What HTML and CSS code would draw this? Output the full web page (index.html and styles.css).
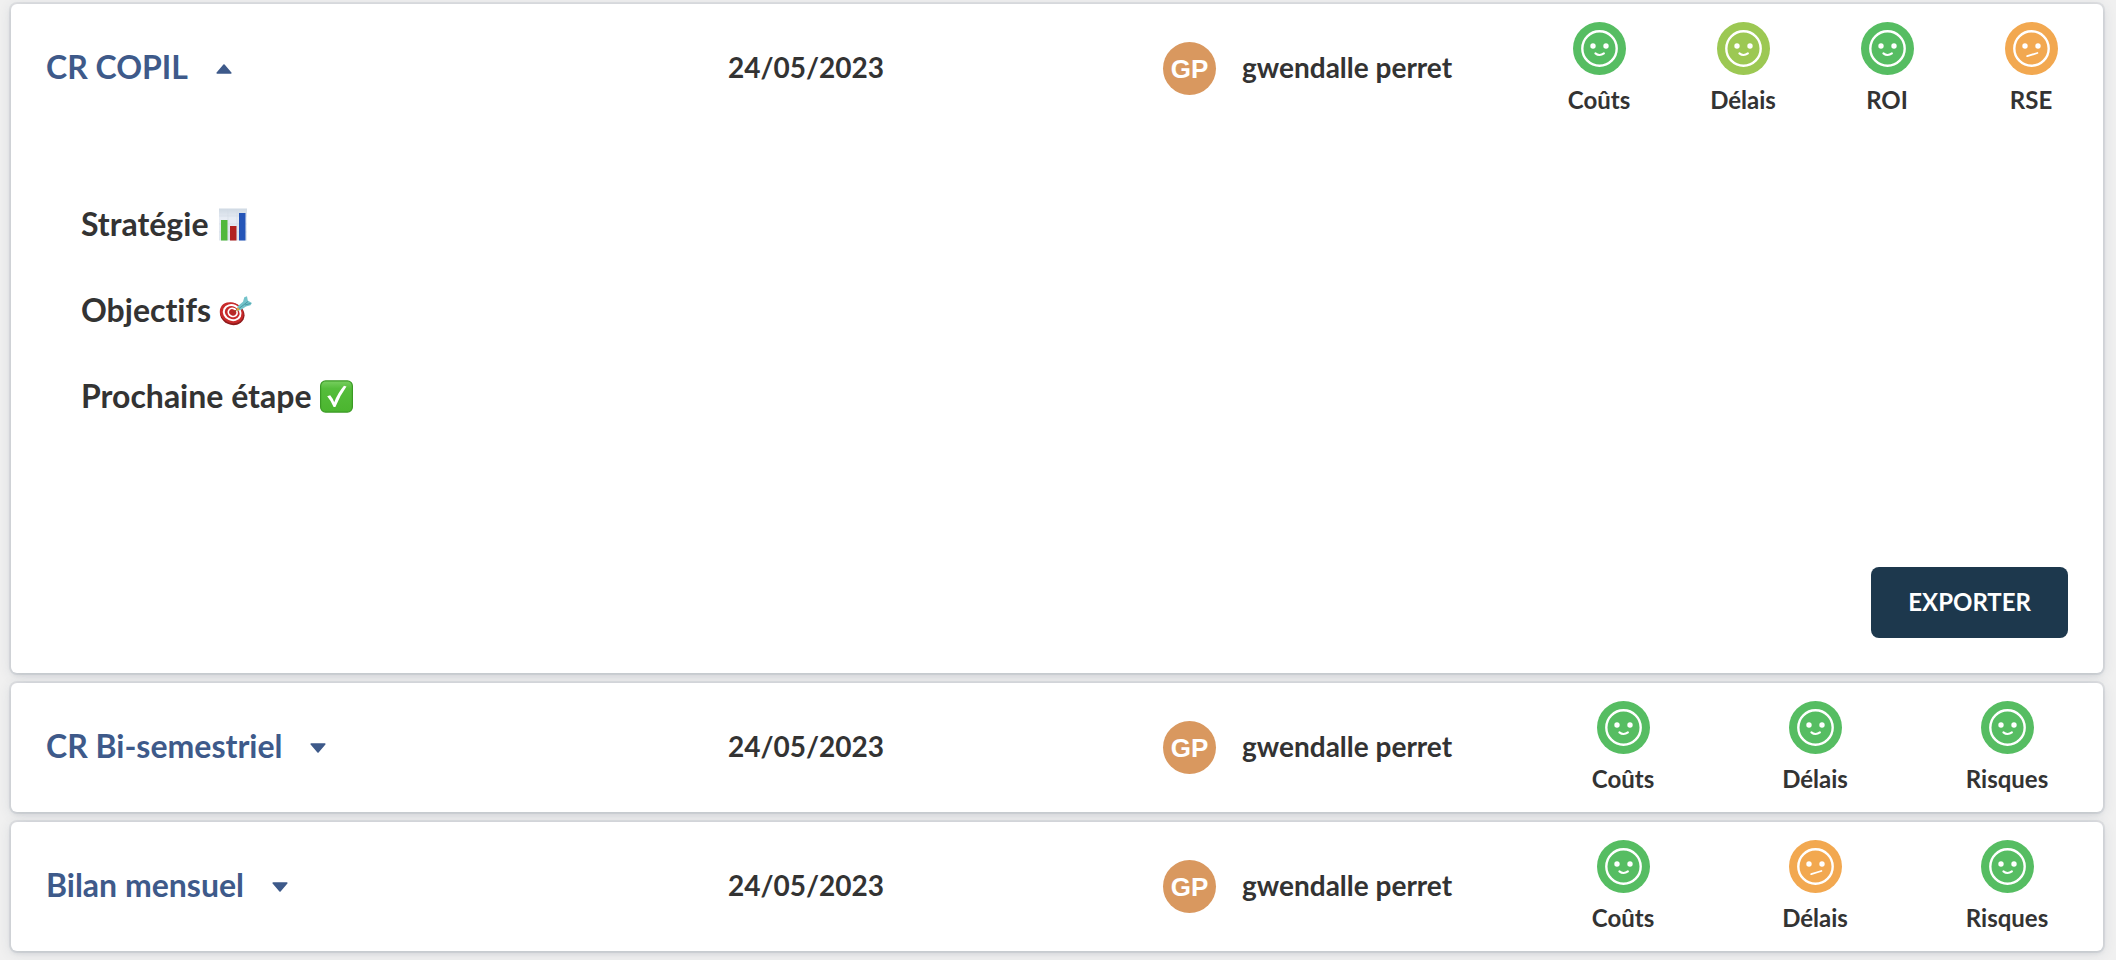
FILE: index.html
```html
<!DOCTYPE html>
<html lang="fr">
<head>
<meta charset="utf-8">
<title>Comptes rendus</title>
<link rel="stylesheet" href="styles.css">
</head>
<body>
<svg class="defs" aria-hidden="true">
  <symbol id="happy" viewBox="0 0 53 53">
    <circle cx="26.5" cy="26.5" r="26.5" fill="currentColor"/>
    <circle cx="26.5" cy="26.5" r="17.2" fill="none" stroke="#fff" stroke-width="2.4"/>
    <circle cx="20" cy="24" r="2.7" fill="#fff"/><circle cx="33" cy="24" r="2.7" fill="#fff"/>
    <path d="M22.4 31.4Q26.5 34.6 30.9 31.4" fill="none" stroke="#fff" stroke-width="2.1" stroke-linecap="round"/>
  </symbol>
  <symbol id="unsure" viewBox="0 0 53 53">
    <circle cx="26.5" cy="26.5" r="26.5" fill="currentColor"/>
    <circle cx="26.5" cy="26.5" r="17.2" fill="none" stroke="#fff" stroke-width="2.4"/>
    <circle cx="20" cy="24" r="2.7" fill="#fff"/><circle cx="33" cy="24" r="2.7" fill="#fff"/>
    <path d="M22.2 34.2L32.4 31" fill="none" stroke="#fff" stroke-width="1.8" stroke-linecap="round"/>
  </symbol>
  <symbol id="caret" viewBox="0 0 16 10">
    <path d="M1.2 1H14.8L8 9Z" fill="currentColor" stroke="currentColor" stroke-width="1.6" stroke-linejoin="round"/>
  </symbol>
</svg>
<main class="reports">
  <article class="card card-open">
    <header class="row">
      <button class="toggle" type="button" aria-expanded="true"><span class="label">CR COPIL</span> <svg class="caret caret-up"><use href="#caret"/></svg></button>
      <time class="date label" datetime="2023-05-24">24/05/2023</time>
      <div class="author"><span class="avatar">GP</span><span class="label">gwendalle perret</span></div>
      <ul class="scores">
        <li class="score"><svg class="face good"><use href="#happy"/></svg>Coûts</li>
        <li class="score"><svg class="face fair"><use href="#happy"/></svg>Délais</li>
        <li class="score"><svg class="face good"><use href="#happy"/></svg>ROI</li>
        <li class="score"><svg class="face poor"><use href="#unsure"/></svg>RSE</li>
      </ul>
    </header>
    <div class="content">
      <h2 class="section">Stratégie
        <svg class="emoji" viewBox="0 0 33 33" role="img" aria-label="Graphique">
          <defs><linearGradient id="paper" x1="0" y1="0" x2="0" y2="1"><stop offset="0" stop-color="#cfd9e3"/><stop offset=".3" stop-color="#e7ecf4"/><stop offset="1" stop-color="#dfe6ee"/></linearGradient></defs>
          <rect x="3" y="0.5" width="28" height="32" fill="url(#paper)"/>
          <path d="M3 8H31M3 16H31M3 24H31M12 1V32M21 1V32" stroke="#d3dbe6" stroke-width=".6"/>
          <rect x="5" y="12" width="6.5" height="20.5" fill="#50b83c"/>
          <rect x="14" y="18" width="6.5" height="14.5" fill="#b2221f"/>
          <rect x="23" y="5" width="6.5" height="27.5" fill="#2455b8"/>
        </svg>
      </h2>
      <h2 class="section">Objectifs
        <svg class="emoji" viewBox="0 0 33 33" role="img" aria-label="Cible">
          <ellipse cx="13.2" cy="20" rx="12.6" ry="10.8" transform="rotate(25 13.2 20)" fill="#8e1a1c"/>
          <ellipse cx="12.7" cy="18.8" rx="12.2" ry="10.2" transform="rotate(25 12.7 18.8)" fill="#c82a2a"/>
          <ellipse cx="13.2" cy="18.6" rx="8.6" ry="7.3" transform="rotate(25 13.2 18.6)" fill="#c82a2a" stroke="#fff" stroke-width="2"/>
          <ellipse cx="13.7" cy="18.4" rx="4.5" ry="3.9" transform="rotate(25 13.7 18.4)" fill="#b92927" stroke="#fff" stroke-width="1.7"/>
          <path d="M14 18.5L20 14" stroke="#963f26" stroke-width="1"/>
          <path d="M17.5 17L19 12 24 7.8 25.3 3.2 28 2.2 28.8 6.6 32.9 9 31.5 11.3 27 12.4 21.8 15.9Z" fill="#74c3ca"/>
          <path d="M20 14.5L29 7.5M26 11L31.5 9.5" stroke="#3c8f9b" stroke-width=".8"/>
          <path d="M17.2 17.2L18.7 13.3 20.9 15.5Z" fill="#dfaa35"/>
        </svg>
      </h2>
      <h2 class="section">Prochaine étape
        <svg class="emoji" viewBox="0 0 33 33" role="img" aria-label="Validé">
          <defs><linearGradient id="green" x1="0" y1="0" x2="0" y2="1"><stop offset="0" stop-color="#78cf60"/><stop offset=".25" stop-color="#55bd3b"/><stop offset="1" stop-color="#4bb52f"/></linearGradient></defs>
          <rect x=".6" y=".9" width="31.8" height="31.2" rx="5" fill="url(#green)" stroke="#3b9a25" stroke-width="1.2"/>
          <path d="M7.2 16.3L10.2 15.2Q13 18.5 14.2 22.2Q18 12.5 24 5.7L26.5 6.4Q19.5 16 15.4 27H13.6Q10.8 20.5 7.2 16.3Z" fill="#fff"/>
        </svg>
      </h2>
    </div>
    <footer class="actions"><button class="export" type="button">EXPORTER</button></footer>
  </article>

  <article class="card">
    <header class="row">
      <button class="toggle" type="button" aria-expanded="false"><span class="label">CR Bi-semestriel</span> <svg class="caret"><use href="#caret"/></svg></button>
      <time class="date label" datetime="2023-05-24">24/05/2023</time>
      <div class="author"><span class="avatar">GP</span><span class="label">gwendalle perret</span></div>
      <ul class="scores">
        <li class="score"><svg class="face good"><use href="#happy"/></svg>Coûts</li>
        <li class="score"><svg class="face good"><use href="#happy"/></svg>Délais</li>
        <li class="score"><svg class="face good"><use href="#happy"/></svg>Risques</li>
      </ul>
    </header>
  </article>

  <article class="card">
    <header class="row">
      <button class="toggle" type="button" aria-expanded="false"><span class="label">Bilan mensuel</span> <svg class="caret"><use href="#caret"/></svg></button>
      <time class="date label" datetime="2023-05-24">24/05/2023</time>
      <div class="author"><span class="avatar">GP</span><span class="label">gwendalle perret</span></div>
      <ul class="scores">
        <li class="score"><svg class="face good"><use href="#happy"/></svg>Coûts</li>
        <li class="score"><svg class="face poor"><use href="#unsure"/></svg>Délais</li>
        <li class="score"><svg class="face good"><use href="#happy"/></svg>Risques</li>
      </ul>
    </header>
  </article>
</main>
</body>
</html>
```
FILE: styles.css
```css
* {
  box-sizing: border-box;
}

body {
  margin: 0;
  background: #f0f0f0;
  color: #333;
  font-family: Lato, "Open Sans", sans-serif;
  font-weight: 700;
  font-variant-ligatures: none;
}

.defs {
  position: absolute;
  width: 0;
  height: 0;
}

.reports {
  display: flex;
  flex-direction: column;
  gap: 10px;
  padding: 4px 13px 9px 11px;
}

.card {
  border-radius: 6px;
  background: #fff;
  box-shadow: 0 0 0 2px rgba(60, 80, 100, .08), 0 2px 4px rgba(40, 70, 90, .1), 0 2px 14px rgba(40, 60, 80, .12);
}

.row {
  display: grid;
  grid-template-columns: 717fr 435fr 364fr 576fr;
  align-items: center;
  min-height: 129px;
}

.label {
  padding-bottom: 3px;
}

.toggle {
  display: flex;
  align-items: center;
  gap: 28px;
  padding: 0 0 0 35px;
  border: 0;
  background: none;
  color: #3e5a8a;
  font: inherit;
  font-size: 32px;
  line-height: 40px;
  cursor: pointer;
}

.caret {
  width: 16px;
  height: 10px;
}

.caret-up {
  transform: rotate(180deg);
}

.date,
.author {
  font-size: 28px;
  line-height: 36px;
}

.author {
  display: flex;
  align-items: center;
  gap: 26px;
}

.avatar {
  display: grid;
  place-items: center;
  width: 53px;
  height: 53px;
  border-radius: 50%;
  background: #d9985f;
  color: #fff;
  font-family: "Liberation Sans", Arial, sans-serif;
  font-size: 26px;
}

.scores {
  display: flex;
  margin: 0;
  padding: 0;
  list-style: none;
}

.score {
  display: flex;
  flex: 1;
  flex-direction: column;
  align-items: center;
  gap: 10px;
  font-size: 24px;
  line-height: 30px;
}

.face {
  width: 53px;
  height: 53px;
}

.good {
  color: #56bd62;
}

.fair {
  color: #9cc853;
}

.poor {
  color: #f2a850;
}

.content {
  display: flex;
  flex-direction: column;
  gap: 46px;
  padding: 71px 70px;
}

.section {
  display: flex;
  align-items: center;
  gap: 8px;
  margin: 0;
  font-size: 32px;
  line-height: 40px;
}

.emoji {
  width: 33px;
  height: 33px;
}

.actions {
  display: flex;
  justify-content: flex-end;
  padding: 80px 35px 35px;
}

.export {
  padding: 17px 37px 19px;
  border: 0;
  border-radius: 8px;
  background: #1d384d;
  color: #fff;
  font: inherit;
  font-size: 24px;
  line-height: 35px;
  cursor: pointer;
}
```
